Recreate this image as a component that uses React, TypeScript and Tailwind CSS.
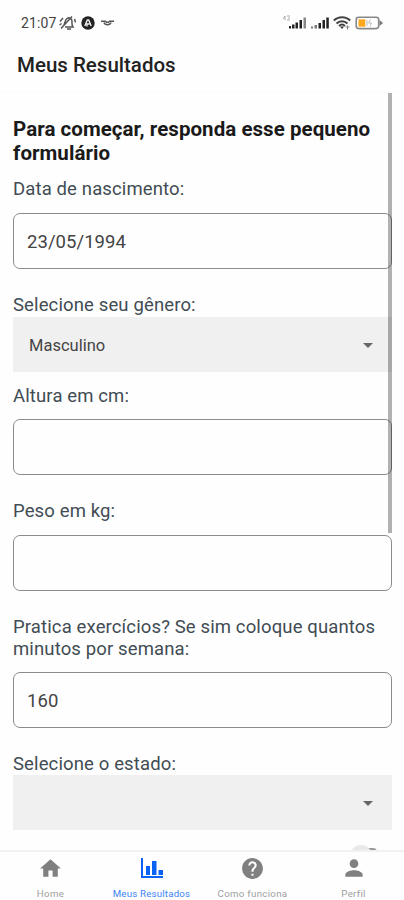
import type { ReactNode } from 'react';
import { MdHelp, MdHome, MdPerson, MdArrowDropDown } from 'react-icons/md';

function StatusBar() {
  return (
    <div className="flex h-[46px] shrink-0 items-center justify-between pl-[21px] pr-[21px]">
      <div className="flex items-center text-[#444]">
        <span className="w-[36px] whitespace-nowrap text-[14px] tracking-[0.1px]">21:07</span>
        <svg className="ml-[2px]" width="17" height="16" viewBox="0 0 17 16" fill="none" stroke="#555" strokeWidth="1.5">
          <path d="M4 11.500c2-2 1.500-6 4-8 2-1.500 5 0 5 2.500 0 2-.5 4 1 6H6M8 14h4M2 13.500 13 1.500M1 6.500l3-3.500M.5 10l2-1.500M15.500 4l1 3.500" />
        </svg>
        <svg className="ml-[5px]" width="14" height="14" viewBox="0 0 14 14">
          <circle cx="7" cy="7" r="6.700" fill="#222" />
          <path d="M3.800 10 6.300 4h1.400l2.500 6M6 10.500V8h2.500" fill="none" stroke="#eee" strokeWidth="1.400" />
        </svg>
        <svg className="ml-[6px]" width="13" height="8" viewBox="0 0 13 8" fill="none" stroke="#555" strokeWidth="1.400">
          <path d="M0 2.200h4.500l1 1h2l1-1H13M3 3.500c1 3 6 3 7 0" />
        </svg>
      </div>
      <div className="flex items-center">
        <svg width="24" height="16" viewBox="0 0 24 16" fill="#222">
          <path d="M0 4 2 1v4M4 1h3M5 3h2M4 5h3" fill="none" stroke="#999" strokeWidth=".8" />
          <path d="M6 11h2v2.500H6zM9 9.500h2.500v4H9zM12.500 7.500H15v6h-2.500zM16.500 5H19v8.500h-2.500z" />
          <path d="M20.500 2.500H23v11h-2.500z" fill="#888" />
        </svg>
        <svg className="ml-[3px]" width="19" height="16" viewBox="0 0 19 16" fill="#222">
          <path d="M1 11.500h2v2H1zM4.500 10H7v3.500H4.500z" fill="#777" />
          <path d="M8.500 8H11v5.500H8.500zM12.500 5H15v8.500h-2.500zM16.300 2.500h2.500v11h-2.500z" />
        </svg>
        <svg className="ml-[4px]" width="18" height="16" viewBox="0 0 18 16" fill="none" stroke="#444" strokeWidth="2">
          <path d="M.8 5.500c4.500-4.500 11.900-4.500 16.400 0M3.500 8.500c3-3 8-3 11 0M6 11c2-2 4-2 6 0" />
          <path d="m7 11.500 2 2.500 2-2.500z" fill="#333" stroke="none" />
          <path d="M12.500 12h4M14.500 10.500v4" stroke="#888" strokeWidth="1" />
        </svg>
        <svg className="ml-[4px]" width="28" height="14" viewBox="0 0 28 14">
          <rect x="1.200" y="1.200" width="22.500" height="11.400" rx="2.500" fill="#fff" stroke="#888" strokeWidth="1.600" />
          <path d="M24.500 4 28 7l-3.500 3z" fill="#777" />
          <path d="M3.500 3.300h6.800v7.400H3.500z" fill="#ffa81c" />
          <path d="M12 4v6M15.500 3.500l-2 3.500h3L15 10.500" stroke="#bbb" fill="none" />
        </svg>
      </div>
    </div>
  );
}

function Label({ children }: { children: ReactNode }) {
  return <label className="block text-[18.500px] leading-[22px] tracking-[0.13px] text-[#414c54]">{children}</label>;
}

function TextBox({ value = '' }: { value?: string }) {
  return (
    <div className="flex h-[56px] items-center rounded-[7px] border border-[#8b8b8b] px-[13px] pt-[3px] text-[18.500px] tracking-[0.05px] text-[#444]">
      {value}
    </div>
  );
}

function SelectBox({ value = '' }: { value?: string }) {
  return (
    <div className="flex h-[55px] items-center justify-between bg-[#f0f0f0] pl-[16px] pr-[12px] text-[16.500px] text-[#444]">
      <span className="pt-[3px]">{value}</span>
      <MdArrowDropDown size={24} color="#666" />
    </div>
  );
}

interface TabProps {
  icon: ReactNode;
  label: string;
  active?: boolean;
}

function Tab({ icon, label, active = false }: TabProps) {
  return (
    <div className={active ? 'flex flex-1 flex-col items-center text-[#0a62f5]' : 'flex flex-1 flex-col items-center text-[#808080]'}>
      <div className="mt-[3px] flex h-[28px] items-center">{icon}</div>
      <span className={active ? 'mt-[6px] whitespace-nowrap text-[9.700px] leading-[13px] tracking-[0.2px] text-[#3d82f5]' : 'mt-[6px] whitespace-nowrap text-[9.700px] leading-[13px] tracking-[0.3px] text-[#a0a0a0]'}>
        {label}
      </span>
    </div>
  );
}

export default function App() {
  return (
    <div className="flex h-[900px] w-[404px] flex-col overflow-hidden bg-[#fefefe] font-['Roboto','Open_Sans',sans-serif]">
      <StatusBar />
      <header className="flex h-[47px] shrink-0 items-center border-b border-[#fafafa] px-[17px] pb-[8px]">
        <h1 className="text-[20.500px] font-medium leading-[24px] text-[#222]">Meus Resultados</h1>
      </header>

      <main className="relative min-h-0 flex-1 overflow-hidden pl-[13px] pr-[12px] pt-[24px]">
        <h2 className="text-[20.500px] font-bold leading-[24px] tracking-[0.05px] text-[#1a1a1a]">
          Para começar, responda esse pequeno formulário
        </h2>
        <div className="mt-[13px]">
          <Label>Data de nascimento:</Label>
          <div className="mt-[13px]">
            <TextBox value="23/05/1994" />
          </div>
        </div>
        <div className="mt-[25px]">
          <Label>Selecione seu gênero:</Label>
          <div className="mt-px">
            <SelectBox value="Masculino" />
          </div>
        </div>
        <div className="mt-[13px]">
          <Label>Altura em cm:</Label>
          <div className="mt-[12px]">
            <TextBox />
          </div>
        </div>
        <div className="mt-[25px]">
          <Label>Peso em kg:</Label>
          <div className="mt-[13px]">
            <TextBox />
          </div>
        </div>
        <div className="mt-[25px]">
          <Label>Pratica exercícios? Se sim coloque quantos minutos por semana:</Label>
          <div className="mt-[12px]">
            <TextBox value="160" />
          </div>
        </div>
        <div className="mt-[25px]">
          <Label>Selecione o estado:</Label>
          <SelectBox />
        </div>
        {/* Switch cut off by the tab bar */}
        <div className="mt-[15px] flex justify-end pr-[14px]">
          <svg width="28" height="24" viewBox="0 0 28 24">
            <rect x="8" y="3" width="19" height="16" rx="4" fill="#999" />
            <circle cx="11" cy="11" r="11" fill="#e9e9e9" />
          </svg>
        </div>
        {/* Scroll indicator */}
        <div className="absolute right-[12px] top-0 h-[440px] w-[4px] bg-black/30" />
      </main>

      <nav className="flex h-[50px] shrink-0 border-t-2 border-[#f1f1f1] bg-[#fefefe]">
        <Tab icon={<MdHome size={25} />} label="Home" />
        <Tab
          active
          label="Meus Resultados"
          icon={
            <svg width="22" height="20" viewBox="0 0 22 20" fill="currentColor">
              <path d="M0 0h2v18h20v2H0zM5 8h4v9H5zM11 3h4.500v14H11zM17.500 12H22v5h-4.500z" />
            </svg>
          }
        />
        <Tab icon={<MdHelp size={25} />} label="Como funciona" />
        <Tab icon={<MdPerson size={26} />} label="Perfil" />
      </nav>
    </div>
  );
}
